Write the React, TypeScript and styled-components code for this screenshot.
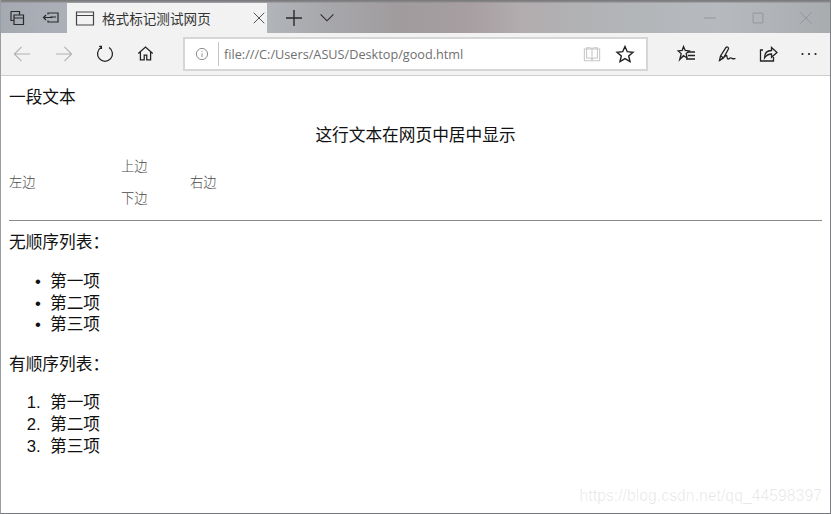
import React from "react";
import styled, { createGlobalStyle } from "styled-components";

const Global = createGlobalStyle`
  html, body { margin: 0; padding: 0; background: #fff; overflow: hidden; }
  * { box-sizing: border-box; }
`;

const Window = styled.div`
  position: relative;
  width: 831px;
  height: 514px;
  display: flex;
  flex-direction: column;
  border-left: 1px solid #9a9da1;
  border-right: 1px solid #7f8085;
  border-bottom: 1px solid #77787c;
  background: #fff;
  overflow: hidden;
  font-family: "Noto Sans CJK SC", "Liberation Sans", sans-serif;
`;

const TitleBar = styled.div`
  height: 33px;
  flex: none;
  display: flex;
  align-items: flex-end;
  margin-left: -1px;
  margin-right: -1px;
  padding-right: 1px;
  background:
    linear-gradient(#77777a 0, #8b8b8e 2px, transparent 3px),
    linear-gradient(90deg, #a4a9b2 0, #abb0b8 60px, #b3b6bb 260px, #a8a9ad 320px, #a09b9d 400px, #a79fa2 470px, #b2acae 520px, #b1b3b6 600px, #b6babe 720px, #a9acaf 831px);
`;

const IconSlot = styled.div<{ $w: number; $ml?: number }>`
  width: ${(p) => p.$w}px;
  margin-left: ${(p) => p.$ml ?? 0}px;
  height: 30px;
  flex: none;
  display: flex;
  align-items: center;
  justify-content: center;
  color: #2a2a2c;
`;

const Tab = styled.div`
  width: 200px;
  height: 30px;
  flex: none;
  display: flex;
  align-items: center;
  background: #f2f2f2;
  padding-left: 8px;
`;

const TabTitle = styled.span`
  margin-left: 7px;
  width: 150px;
  font-size: 13.6px;
  color: #333;
  white-space: nowrap;
`;

const Spacer = styled.div`
  flex: 1;
`;

const Toolbar = styled.div`
  height: 43px;
  flex: none;
  display: flex;
  align-items: center;
  background: #f2f2f2;
  border-bottom: 1px solid #cfcfcf;
  padding-bottom: 1px;
  margin-left: -1px;
  margin-right: -1px;
`;

const ToolSlot = styled.div<{ $w: number }>`
  width: ${(p) => p.$w}px;
  height: 30px;
  flex: none;
  display: flex;
  align-items: center;
  justify-content: center;
  color: #222;
`;

const AddressBox = styled.div`
  width: 465px;
  height: 34px;
  flex: none;
  margin-left: 18px;
  padding-right: 4px;
  display: flex;
  align-items: center;
  background: #fff;
  border: 2px solid #d6d6d6;
`;

const InfoSlot = styled.div`
  width: 33px;
  flex: none;
  display: flex;
  justify-content: center;
`;

const Divider = styled.div`
  width: 1px;
  height: 24px;
  flex: none;
  background: #c4c4c4;
`;

const Url = styled.span`
  margin-left: 5px;
  flex: 1;
  font-family: "Open Sans", "Noto Sans", sans-serif;
  font-size: 12.7px;
  color: #6f6f6f;
  white-space: nowrap;
`;

const Page = styled.main`
  flex: 1;
  padding: 9px 8px 0 8px;
  color: #111;
  font-size: 16.7px;
  line-height: 22px;
`;

const Para = styled.p<{ $center?: boolean }>`
  margin: 0;
  text-align: ${(p) => (p.$center ? "center" : "left")};
`;

const CenterPara = styled(Para)`
  margin-top: 16px;
`;

const Table = styled.div`
  display: grid;
  grid-template-columns: 112px 69px 40px;
  grid-auto-rows: 16px;
  margin-top: 13px;
  font-family: "Noto Sans CJK SC", serif;
  font-weight: 300;
  font-size: 13.3px;
  line-height: 16px;
  color: #4a4a4a;
`;

const Rule = styled.hr`
  margin: 14px 0 0;
  height: 1px;
  border: none;
  background: #8a8a8a;
  border-top: 1px solid #8a8a8a;
`;

const ListLabel = styled(Para)`
  margin-top: 9px;
`;

const BulletList = styled.ul`
  margin: 18px 0 0;
  padding-left: 41px;
  line-height: 21.7px;
  li::marker {
    content: "•  ";
    font-family: "Liberation Sans", sans-serif;
  }
`;

const NumberList = styled.ol`
  margin: 17px 0 0;
  padding-left: 41px;
  line-height: 21.7px;
  li::marker {
    content: counter(list-item) ".  ";
    font-family: "Liberation Sans", sans-serif;
  }
`;

const SecondLabel = styled(Para)`
  margin-top: 17px;
`;

const Watermark = styled.div`
  position: absolute;
  right: 8px;
  bottom: 7px;
  font-family: "Liberation Sans", sans-serif;
  font-size: 15.8px;
  line-height: 20px;
  color: rgba(0, 0, 0, 0.09);
  white-space: nowrap;
`;

const Stroke: React.FC<{ size?: number; color?: string; sw?: number; children: React.ReactNode }> = ({
  size = 20,
  color = "currentColor",
  sw = 1.2,
  children,
}) => (
  <svg width={size} height={size} viewBox="0 0 20 20" fill="none" stroke={color} strokeWidth={sw}>
    {children}
  </svg>
);

export default function App() {
  return (
    <>
      <Global />
      <Window>
        <TitleBar>
          <IconSlot $w={35}>
            <Stroke>
              <path d="M3 3.500h8.500v3M3 3.500v9h3M6 7h9.500v9.500H6zM6 10h9.500" />
            </Stroke>
          </IconSlot>
          <IconSlot $w={32}>
            <Stroke>
              <path d="M7 6.500V5h10v9H7v-1.500M2.500 9.500h9M5 7l-2.500 2.500L5 12M9 9h6" />
            </Stroke>
          </IconSlot>
          <Tab>
            <Stroke size={20} color="#444">
              <path d="M1.500 4h17v13h-17zM1.500 7.500h17" />
            </Stroke>
            <TabTitle>格式标记测试网页</TabTitle>
            <Stroke size={14} color="#333">
              <path d="M2.500 2.500l15 15M17.500 2.500l-15 15" />
            </Stroke>
          </Tab>
          <IconSlot $w={48} $ml={3}>
            <Stroke size={20} color="#2a2a2c" sw={1.4}>
              <path d="M2 10h16M10 2v16" />
            </Stroke>
          </IconSlot>
          <IconSlot $w={18}>
            <Stroke size={16} color="#2a2a2c" sw={1.4}>
              <path d="M2 5.500l8 8 8-8" />
            </Stroke>
          </IconSlot>
          <Spacer />
          <IconSlot $w={48}>
            <Stroke size={14} color="#8e9095">
              <path d="M1.500 10h17" />
            </Stroke>
          </IconSlot>
          <IconSlot $w={48}>
            <Stroke size={14} color="#8e9095">
              <path d="M3 3h14v14H3z" />
            </Stroke>
          </IconSlot>
          <IconSlot $w={48}>
            <Stroke size={14} color="#8e9095">
              <path d="M2 2l16 16M18 2L2 18" />
            </Stroke>
          </IconSlot>
        </TitleBar>
        <Toolbar>
          <ToolSlot $w={43}>
            <Stroke color="#b0b0b0" size={18}>
              <path d="M19 10H1.500M9.500 2l-8 8 8 8" />
            </Stroke>
          </ToolSlot>
          <ToolSlot $w={41}>
            <Stroke color="#b0b0b0" size={18}>
              <path d="M1 10h17.500M10.500 2l8 8-8 8" />
            </Stroke>
          </ToolSlot>
          <ToolSlot $w={42}>
            <Stroke size={18} sw={1.4}>
              <path d="M5.500 2.800a8.300 8.300 0 1 0 9 0M3.500 1.500h2.500v3" />
            </Stroke>
          </ToolSlot>
          <ToolSlot $w={39}>
            <Stroke size={17} sw={1.5}>
              <path d="M1.500 10L10 2.500l8.500 7.500M4 8v9.500h4.500V12h3v5.500H16V8" />
            </Stroke>
          </ToolSlot>
          <AddressBox>
            <InfoSlot>
              <Stroke size={14} color="#777">
                <circle cx="10" cy="10" r="8" />
                <path d="M10 9v5.500M10 5.500v1.500" />
              </Stroke>
            </InfoSlot>
            <Divider />
            <Url>file:///C:/Users/ASUS/Desktop/good.html</Url>
            <ToolSlot $w={33}>
              <Stroke size={18} color="#c8c8c8">
                <path d="M1.500 4.500h17v13h-17zM10 4.500v13M4 3v11.500h4.500L10 16l1.500-1.500H16V3l-4.500 0L10 4.500 8.500 3z" />
              </Stroke>
            </ToolSlot>
            <ToolSlot $w={34}>
              <Stroke size={20} sw={1.4}>
                <path d="M10 2.500l2.300 5.200 5.700.5-4.300 3.800 1.300 5.600-5-3-5 3 1.300-5.600L2 8.200l5.700-.5z" />
              </Stroke>
            </ToolSlot>
          </AddressBox>
          <ToolSlot $w={24} />
          <ToolSlot $w={28}>
            <Stroke size={20} sw={1.3}>
              <path d="M7.500 2.500l1.700 4 4 .4-3 2.700.9 4.400-3.600-2.300-3.800 3.800 1.500-5.900-3-2.700 4-.4z" />
              <path d="M12 8h7M12 11.500h7M10 15h9" />
            </Stroke>
          </ToolSlot>
          <ToolSlot $w={54}>
            <Stroke size={20} sw={1.3}>
              <path d="M2.500 16.500l1-4.500 5.500-8.500c1-1.300 3.200 0 2.400 1.500L6.500 14zM4 12l2.500 2M2.500 16.500c2-.5 5.500-5 7-5 1 0 0 3.500 1.500 3.500s1.500-1.500 3-1 2.500 1.200 4.500.5" />
            </Stroke>
          </ToolSlot>
          <ToolSlot $w={28}>
            <Stroke size={20} sw={1.3}>
              <path d="M5 6H2.500v11h13v-4M6.500 14c0-5 3-7.500 7-7.500V3.500l5.500 5-5.500 4.800V10c-3 0-5 1-7 4z" />
            </Stroke>
          </ToolSlot>
          <ToolSlot $w={54}>
            <Stroke size={20} sw={0}>
              <circle cx="3.500" cy="10" r="1.100" fill="#222" />
              <circle cx="10" cy="10" r="1.100" fill="#222" />
              <circle cx="16.500" cy="10" r="1.100" fill="#222" />
            </Stroke>
          </ToolSlot>
        </Toolbar>
        <Page>
          <Para>一段文本</Para>
          <CenterPara $center>这行文本在网页中居中显示</CenterPara>
          <Table>
            <span />
            <span>上边</span>
            <span />
            <span>左边</span>
            <span />
            <span>右边</span>
            <span />
            <span>下边</span>
            <span />
          </Table>
          <Rule />
          <ListLabel>无顺序列表：</ListLabel>
          <BulletList>
            <li>第一项</li>
            <li>第二项</li>
            <li>第三项</li>
          </BulletList>
          <SecondLabel>有顺序列表：</SecondLabel>
          <NumberList>
            <li>第一项</li>
            <li>第二项</li>
            <li>第三项</li>
          </NumberList>
        </Page>
        <Watermark>https://blog.csdn.net/qq_44598397</Watermark>
      </Window>
    </>
  );
}
